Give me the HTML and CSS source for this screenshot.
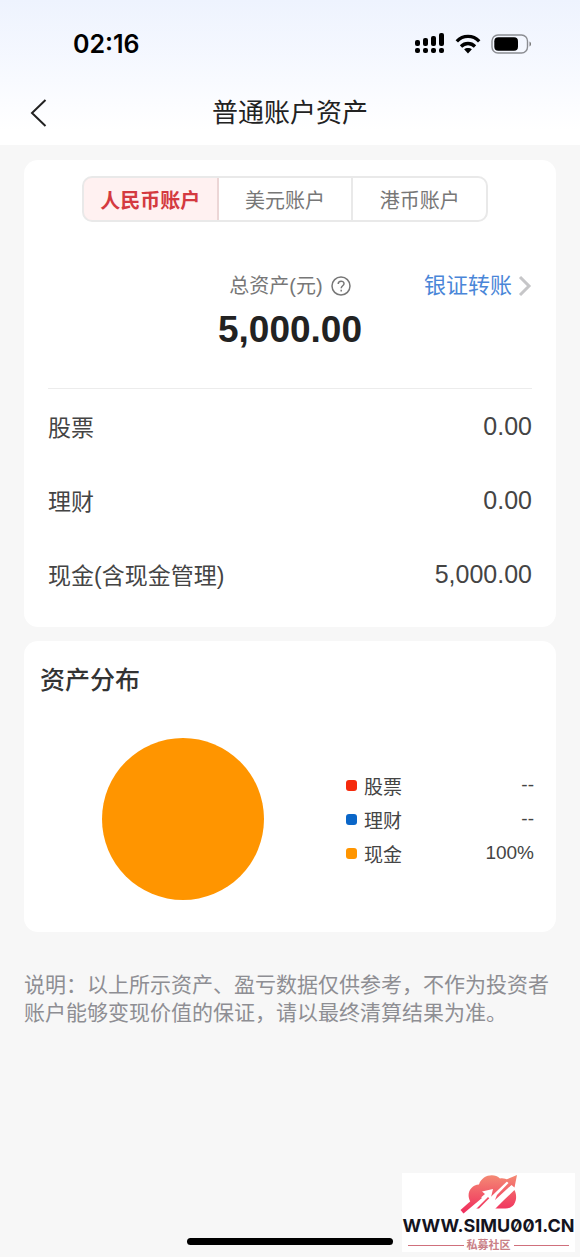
FILE: index.html
```html
<!DOCTYPE html>
<html lang="zh-CN">
<head>
<meta charset="utf-8">
<meta name="viewport" content="width=device-width, initial-scale=1">
<title>普通账户资产</title>
<link rel="stylesheet" href="styles.css">
</head>
<body>
<div class="page">
  <header class="header">
    <div class="status">
      <time class="clock">02:16</time>
      <div class="status-icons">
        <svg width="30" height="21" viewBox="0 0 30 21" aria-hidden="true">
          <rect x="0" y="7" width="5" height="6" rx="2"/>
          <rect x="8" y="5" width="5" height="8" rx="2"/>
          <rect x="16" y="3" width="5" height="10" rx="2"/>
          <rect x="24" y="0" width="5" height="13" rx="2"/>
          <rect x="0" y="15" width="5" height="5" rx="2"/>
          <rect x="8" y="15" width="5" height="5" rx="2"/>
          <rect x="16" y="15" width="5" height="5" rx="2"/>
          <rect x="24" y="15" width="5" height="5" rx="2"/>
        </svg>
        <svg width="26" height="20" viewBox="0 0 26 20" aria-hidden="true">
          <path d="M1.800 7.400C8 .8 18 .8 24.200 7.400M6 12.500c4-4 10-4 14 0" fill="none" stroke="#000" stroke-width="3.300"/>
          <path d="M13 19.500l-3.900-4.200c2-1.900 5.800-1.900 7.800 0z"/>
        </svg>
        <svg width="41" height="20" viewBox="0 0 41 20" aria-hidden="true">
          <rect x="1" y="1" width="35.500" height="18" rx="6" fill="none" stroke="#8b8d92" stroke-width="1.400"/>
          <rect x="3.300" y="3.300" width="23.700" height="13.400" rx="4"/>
          <path d="M38.500 7.500c2 .8 2 4.200 0 5z" fill="#777"/>
        </svg>
      </div>
    </div>
    <nav class="nav">
      <button class="back" type="button" aria-label="返回">
        <svg width="18" height="30" viewBox="0 0 18 30" aria-hidden="true"><path d="M15.500 2L2 15l13.500 13" fill="none" stroke="#222" stroke-width="2"/></svg>
      </button>
      <h1 class="title">普通账户资产</h1>
    </nav>
  </header>

  <main class="content">
    <section class="card summary">
      <div class="tabs">
        <button class="tab active" type="button">人民币账户</button>
        <button class="tab" type="button">美元账户</button>
        <button class="tab" type="button">港币账户</button>
      </div>
      <div class="total-head">
        <div class="total-label">总资产(元)
          <button class="help" type="button" aria-label="总资产说明">
            <svg width="20" height="20" viewBox="0 0 20 20" fill="none" stroke="#777" stroke-width="1.500" aria-hidden="true"><circle cx="10" cy="10" r="9"/><path d="M7.200 8c0-3.800 5.800-3.700 5.800-.3 0 2-2.800 2.200-2.800 4.600"/><path d="M10.200 13.800v1.700"/></svg>
          </button>
        </div>
        <a class="transfer" href="#">银证转账
          <svg width="14" height="22" viewBox="0 0 14 22" aria-hidden="true"><path d="M2 2l9 9-9 9" fill="none" stroke="#c6c6c8" stroke-width="3"/></svg>
        </a>
      </div>
      <p class="total">5,000.00</p>
      <dl class="rows">
        <div class="row"><dt>股票</dt><dd>0.00</dd></div>
        <div class="row"><dt>理财</dt><dd>0.00</dd></div>
        <div class="row"><dt>现金(含现金管理)</dt><dd>5,000.00</dd></div>
      </dl>
    </section>

    <section class="card spread">
      <h2 class="subtitle">资产分布</h2>
      <div class="chart">
        <svg class="pie" viewBox="0 0 162 162" role="img" aria-label="现金 100%"><circle cx="81" cy="81" r="81" fill="#ff9500"/></svg>
        <ul class="legend">
          <li class="item"><span class="dot red"></span>股票<span class="value">--</span></li>
          <li class="item"><span class="dot blue"></span>理财<span class="value">--</span></li>
          <li class="item"><span class="dot orange"></span>现金<span class="value">100%</span></li>
        </ul>
      </div>
    </section>

    <p class="note">说明：以上所示资产、盈亏数据仅供参考，不作为投资者账户能够变现价值的保证，请以最终清算结果为准。</p>
  </main>

  <div class="home-bar"></div>

  <aside class="mark">
    <svg class="mark-logo" width="60" height="41" viewBox="0 0 60 41" aria-hidden="true">
      <defs><linearGradient id="cloud" gradientUnits="userSpaceOnUse" x1="0" y1="2" x2="0" y2="40"><stop offset="0" stop-color="#f48a74"/><stop offset="1" stop-color="#f02c5c"/></linearGradient></defs>
      <g fill="url(#cloud)">
        <path d="M11 28C7 20 12 12 20 11.500 23 2 35-.5 41 5.500c3-.6 6 .2 8 2L28 27.500 20 35.500H14z"/>
        <path d="M36 35.500L55.500 17c4 8 .5 18.500-9 18.500z"/>
        <path d="M38 22L49.500 10 46 7l12-5-2.500 12.500-3-2.500L36 27z"/>
      </g>
      <path d="M8 36.500l18-15.500-3-2.500 11-2.500-2.500 10.500-2.500-2.500L15 38z" fill="#fff"/>
      <path d="M27 37l25-24 3 3-20 21z" fill="#fff"/>
      <path d="M1.500 37L19 21.500l4 3.500L4.500 40.500z" fill="url(#cloud)"/>
    </svg>
    <span class="mark-url">WWW.SIMU001.CN</span>
    <span class="mark-name">私募社区</span>
  </aside>
</div>
</body>
</html>
```
FILE: styles.css
```css
* { box-sizing: border-box; }

body {
  margin: 0;
  background: #f7f7f7;
  color: #444;
  font-family: "Liberation Sans", "Noto Sans CJK SC", sans-serif;
}

h1, h2, p, dl, dd, ul { margin: 0; padding: 0; }

button {
  margin: 0;
  padding: 0;
  border: 0;
  background: none;
  color: inherit;
  font: inherit;
}

svg { display: block; }

.page {
  position: relative;
  display: flex;
  flex-direction: column;
  min-height: 100vh;
  padding-bottom: 12px;
}

.header { background: linear-gradient(#eef3fe, #f8faff 55%, #fff 90%); }

.status {
  display: flex;
  align-items: center;
  justify-content: space-between;
  height: 80px;
  padding: 7px 48px 0 73px;
}

.clock {
  color: #000;
  font: 600 25px/30px Inter, sans-serif;
}

.status-icons {
  display: flex;
  align-items: center;
  gap: 10px;
}

.nav {
  display: grid;
  grid-template-columns: 1fr auto 1fr;
  align-items: center;
  height: 65px;
  padding: 0 30px;
}

.back { justify-self: start; }

.title {
  color: #222;
  font-size: 26px;
  font-weight: 400;
  line-height: 36px;
}

.content {
  display: flex;
  flex-direction: column;
  gap: 14px;
  padding: 15px 24px;
}

.card {
  border-radius: 14px;
  background: #fff;
}

.summary { padding: 16px 24px; }

.tabs {
  display: flex;
  height: 46px;
  margin: 0 44px 0 34px;
  border: 2px solid #e9e9e9;
  border-radius: 10px;
  overflow: hidden;
}

.tab {
  flex: 1;
  color: #777;
  font-size: 20px;
}

.tab + .tab { border-left: 2px solid #e9e9e9; }

.tab.active {
  margin: -2px 0 -2px -2px;
  border: 2px solid #ecd6d6;
  border-right: 0;
  border-radius: 10px 0 0 10px;
  background: #fff1f1;
  color: #d43a40;
  font-weight: 700;
}

.tab.active + .tab { border-left-color: #ecd6d6; }

.total-head {
  display: grid;
  grid-template-columns: 1fr auto 1fr;
  align-items: center;
  margin-top: 48px;
  line-height: 32px;
}

.total-label {
  display: flex;
  grid-column: 2;
  align-items: center;
  gap: 8px;
  color: #777;
  font-size: 20px;
}

.transfer {
  display: flex;
  align-items: center;
  justify-self: end;
  gap: 6px;
  color: #4a86d8;
  font-size: 22px;
  text-decoration: none;
}

.total {
  margin-top: 6px;
  color: #222;
  font-size: 37px;
  font-weight: 700;
  line-height: 44px;
  text-align: center;
}

.rows {
  margin-top: 36px;
  border-top: 1px solid #ececec;
}

.row {
  display: flex;
  align-items: center;
  justify-content: space-between;
  height: 74px;
  font-size: 23px;
}

.row dd { font-size: 25px; }

.spread { padding: 20px 22px 32px 16px; }

.subtitle {
  color: #333;
  font-size: 25px;
  font-weight: 500;
  line-height: 38px;
}

.chart {
  display: flex;
  align-items: center;
  justify-content: space-between;
  gap: 24px;
  margin-top: 39px;
  padding-left: 62px;
}

.pie { width: 162px; }

.legend {
  width: 188px;
  list-style: none;
}

.item {
  display: flex;
  align-items: center;
  height: 34px;
  font-size: 19px;
}

.value { margin-left: auto; }

.dot {
  width: 11px;
  height: 11px;
  margin-right: 7px;
  border-radius: 3px;
}

.red { background: #f52a0c; }
.blue { background: #0a66c8; }
.orange { background: #ff9500; }

.note {
  margin-top: 25px;
  color: #8e8e93;
  font-size: 21px;
  line-height: 28px;
}

.home-bar {
  width: 206px;
  height: 7px;
  margin: auto auto 0;
  border-radius: 4px;
  background: #000;
}

.mark {
  position: absolute;
  right: 5px;
  bottom: 5px;
  display: flex;
  flex-direction: column;
  align-items: center;
  width: 173px;
  background: #fff;
}

.mark-url {
  color: #14141e;
  font: 700 18px/24px Inter, sans-serif;
  font-feature-settings: "zero";
  white-space: nowrap;
}

.mark-name {
  display: flex;
  align-items: center;
  gap: 3px;
  align-self: stretch;
  padding: 0 6px;
  color: #c98086;
  font-size: 11px;
  font-weight: 700;
  line-height: 14px;
}

.mark-name::before,
.mark-name::after {
  flex: 1;
  height: 1px;
  background: #d0707c;
  content: "";
}
```
